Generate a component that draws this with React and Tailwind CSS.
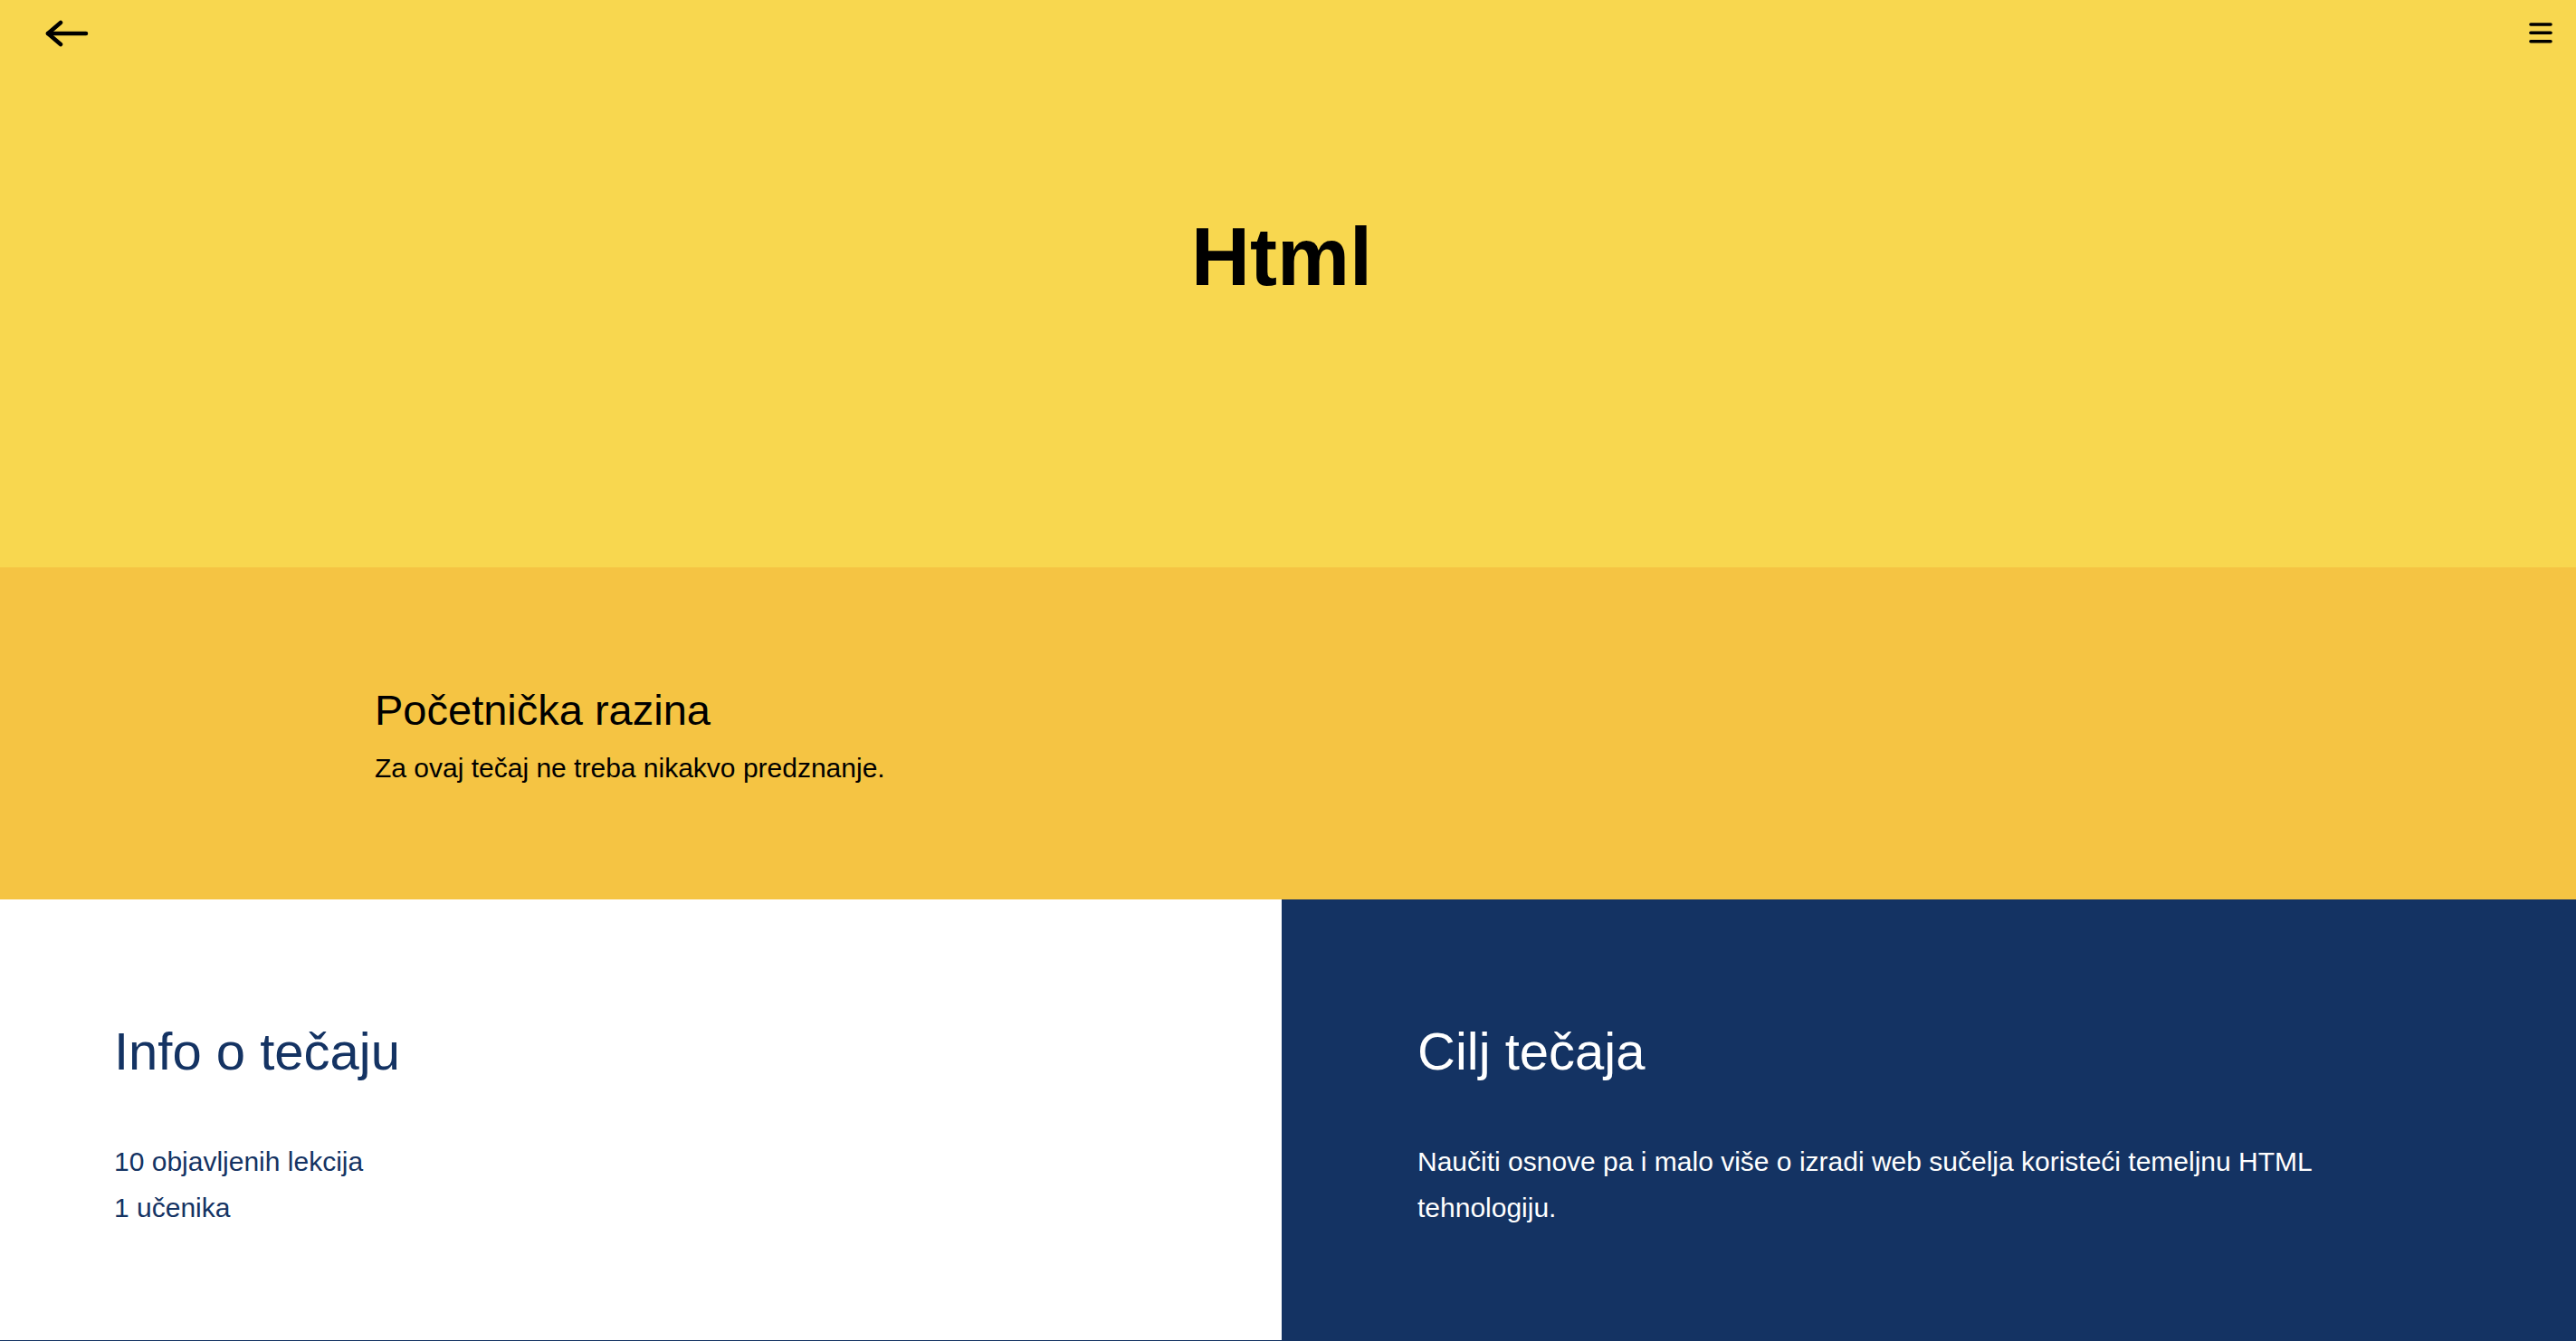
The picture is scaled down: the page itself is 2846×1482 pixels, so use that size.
const BackArrow = () => (
    <svg
        width="48"
        height="32"
        viewBox="0 0 48 32"
        fill="none"
        stroke="currentColor"
        strokeWidth="4.5"
        strokeLinecap="round"
        strokeLinejoin="round">
        <path d="M3 16H45" />
        <path d="M17 4L3 16L17 28" />
    </svg>
)

const MenuIcon = () => (
    <svg
        width="26"
        height="24"
        viewBox="0 0 26 24"
        fill="none"
        stroke="currentColor"
        strokeWidth="3.6"
        strokeLinecap="round">
        <path d="M2 3H24" />
        <path d="M2 12.3H24" />
        <path d="M2 21.7H24" />
    </svg>
)

export default function App() {
    return (
        <div className="min-h-screen bg-white font-['Liberation_Sans',Arial,sans-serif]">
            {/* hero */}
            <header className="h-[627px] bg-[#f8d74f] text-black">
                <nav className="flex items-start justify-between pl-[50px] pr-[26px] pt-[21px]">
                    <button type="button" className="flex">
                        <BackArrow />
                    </button>
                    <button type="button" className="mt-[3px] flex">
                        <MenuIcon />
                    </button>
                </nav>
                <h1 className="mt-[177px] pr-[14px] text-center text-[90px] font-bold leading-[108px]">
                    Html
                </h1>
            </header>

            {/* level */}
            <section className="h-[367px] bg-[#f5c443] pl-[414px] pt-[130px] text-black">
                <h3 className="text-[47px] leading-[56px]">Početnička razina</h3>
                <p className="mt-[10px] text-[30px] leading-[51px]">
                    Za ovaj tečaj ne treba nikakvo predznanje.
                </p>
            </section>

            {/* info + goal */}
            <section className="grid h-[487px] grid-cols-[1416px_1fr]">
                <div className="bg-white pl-[126px] pt-[133px] text-[#143363]">
                    <h2 className="text-[58px] leading-[70px]">Info o tečaju</h2>
                    <ul className="mt-[61px] text-[30px] leading-[51px]">
                        <li>10 objavljenih lekcija</li>
                        <li>1 učenika</li>
                    </ul>
                </div>
                <div className="bg-[#143363] pl-[150px] pr-[190px] pt-[133px] text-white">
                    <h2 className="text-[58px] leading-[70px]">Cilj tečaja</h2>
                    <p className="mt-[61px] text-[30px] leading-[51px]">
                        Naučiti osnove pa i malo više o izradi web sučelja
                        koristeći temeljnu HTML tehnologiju.
                    </p>
                </div>
            </section>

            <footer className="h-[240px] bg-[#143363]" />
        </div>
    )
}
